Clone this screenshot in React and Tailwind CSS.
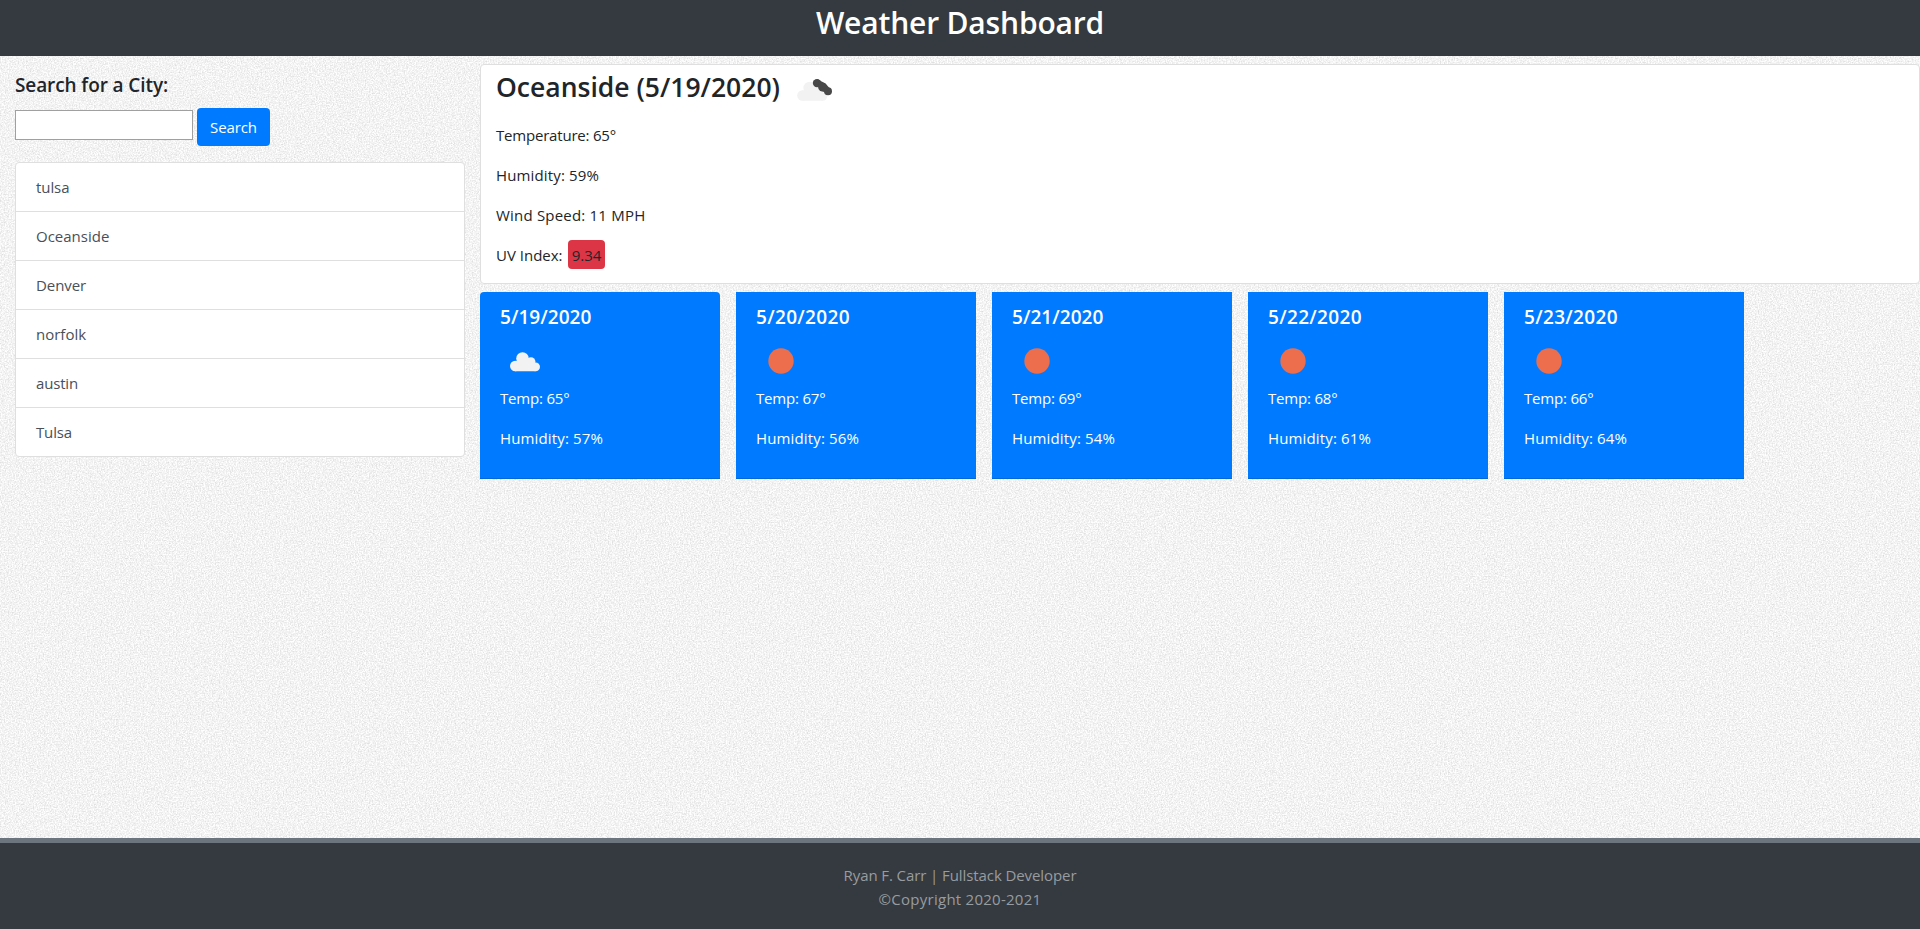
const cities = [
  { name: "tulsa", track: "tracking-[-0.07px]" },
  { name: "Oceanside", track: "tracking-normal" },
  { name: "Denver", track: "tracking-[-0.09px]" },
  { name: "norfolk", track: "tracking-normal" },
  { name: "austin", track: "tracking-[-0.17px]" },
  { name: "Tulsa", track: "tracking-[-0.15px]" },
];

const forecast = [
  { date: "5/19/2020", icon: "cloud", temp: 65, humidity: 57, track: "tracking-[0.06px]" },
  { date: "5/20/2020", icon: "sun", temp: 67, humidity: 56, track: "tracking-[0.34px]" },
  { date: "5/21/2020", icon: "sun", temp: 69, humidity: 54, track: "tracking-[0.06px]" },
  { date: "5/22/2020", icon: "sun", temp: 68, humidity: 61, track: "tracking-[0.34px]" },
  { date: "5/23/2020", icon: "sun", temp: 66, humidity: 64, track: "tracking-[0.34px]" },
];

function Grain() {
  return (
    <svg className="absolute inset-0 -z-10 h-full w-full" aria-hidden="true">
      <filter id="grain" x="0" y="0" width="100%" height="100%" colorInterpolationFilters="sRGB">
        <feTurbulence type="fractalNoise" baseFrequency="0.72" numOctaves="4" seed="4" />
        <feColorMatrix values="0.24 0 0 0 0.833  0.24 0 0 0 0.833  0.24 0 0 0 0.833  0 0 0 0 1" />
      </filter>
      <rect width="100%" height="100%" filter="url(#grain)" />
    </svg>
  );
}

function CloudShape() {
  return (
    <g fill="#f2f2f2">
      <circle cx="15.2" cy="30" r="5.2" />
      <circle cx="22.5" cy="22.5" r="6.3" />
      <circle cx="31" cy="25.6" r="4.4" />
      <circle cx="35.6" cy="30.8" r="4.4" />
      <path d="M15 35.2V25h2l4-3h8l6.6 5v8.2z" />
    </g>
  );
}

function Cloud() {
  return (
    <svg width="50" height="50" viewBox="0 0 50 50">
      <CloudShape />
    </svg>
  );
}

function Sun() {
  return (
    <svg width="50" height="50" viewBox="0 0 50 50">
      <circle cx="25" cy="25" r="12.7" fill="#ec6e4c" />
    </svg>
  );
}

function BrokenClouds() {
  return (
    <svg width="50" height="50" viewBox="0 0 50 50">
      <g transform="translate(-2.8 0.5)">
        <CloudShape />
      </g>
      <g fill="#484848">
        <circle cx="27" cy="18.1" r="4.2" />
        <circle cx="32.6" cy="22.2" r="4.4" />
        <circle cx="38" cy="26.2" r="4" />
        <path d="M27 14l8.500 4.600 3.500 4-2 6-6-3z" />
      </g>
    </svg>
  );
}

export default function App() {
  return (
    <div className="relative isolate flex h-[929px] flex-col overflow-hidden font-['Open_Sans','Noto_Sans',sans-serif] text-[15px] text-[#212529]">
      <Grain />
      <header className="h-14 bg-[#343a40] pt-[3px] text-center text-white">
        <h1 className="text-[30px] leading-[40px] font-semibold tracking-[-0.17px]">Weather Dashboard</h1>
      </header>

      <main className="flex flex-1 items-start">
        <aside className="w-[480px] px-[15px] pt-[17px]">
          <h2 className="text-[19px] leading-6 font-semibold tracking-[-0.1px]">Search for a City:</h2>
          <div className="mt-[11px] flex items-start gap-1">
            <input type="text" className="mt-[2px] h-[30px] w-[178px] border border-[#a0a0a0] bg-white px-1 outline-none" />
            <button className="h-[38px] w-[73px] rounded-[4px] bg-[#007bff] leading-6 tracking-[-0.09px] text-white">Search</button>
          </div>
          <ul className="mt-4 divide-y divide-[#dfdfdf] rounded-[4px] border border-[#dfdfdf] bg-white">
            {cities.map((c) => (
              <li key={c.name} className="h-[49px] px-5 pt-3 leading-6 text-[#495057] last:h-12">
                <span className={c.track}>{c.name}</span>
              </li>
            ))}
          </ul>
        </aside>

        <section className="flex-1 pt-2">
          <div className="h-[220px] rounded-[4px] border border-[#dfdfdf] bg-white px-[15px]">
            <div className="flex h-[50px] items-start">
              <h2 className="w-[294px] pt-[5px] text-[26.5px] leading-[34px] font-semibold whitespace-nowrap">
                Oceanside (5/19/2020)
              </h2>
              <BrokenClouds />
            </div>
            <div className="flex flex-col gap-4 pt-2 leading-6">
              <p className="tracking-[-0.2px]">Temperature: 65°</p>
              <p className="tracking-[0.14px]">Humidity: 59%</p>
              <p className="tracking-[0.2px]">Wind Speed: 11 MPH</p>
              <p className="flex">
                <span className="w-[72px]">UV Index:</span>
                <span className="-my-[3px] h-[29px] w-[37px] rounded-[4px] bg-[#dc3545] py-[3px] text-center">9.34</span>
              </p>
            </div>
          </div>

          <div className="mt-2 flex gap-4">
            {forecast.map((d) => (
              <article
                key={d.date}
                className="h-[187px] w-60 border-b border-[#0069d9] bg-[#007bff] px-5 pt-[13px] leading-6 text-white first:rounded-t-[4px]"
              >
                <h3 className={`text-[19px] leading-6 font-semibold ${d.track}`}>{d.date}</h3>
                <div className="mt-[7px]">{d.icon === "cloud" ? <Cloud /> : <Sun />}</div>
                <p className="tracking-[-0.19px]">Temp: {d.temp}°</p>
                <p className="mt-4 tracking-[0.14px]">Humidity: {d.humidity}%</p>
              </article>
            ))}
          </div>
        </section>
      </main>

      <footer className="h-[91px] border-t-[5px] border-[#6c757d] bg-[#343a40] pt-5 text-center leading-6 text-[#999c9f]">
        <p className="tracking-[-0.09px]">Ryan F. Carr | Fullstack Developer</p>
        <p className="tracking-[0.26px]">©Copyright 2020-2021</p>
      </footer>
    </div>
  );
}
